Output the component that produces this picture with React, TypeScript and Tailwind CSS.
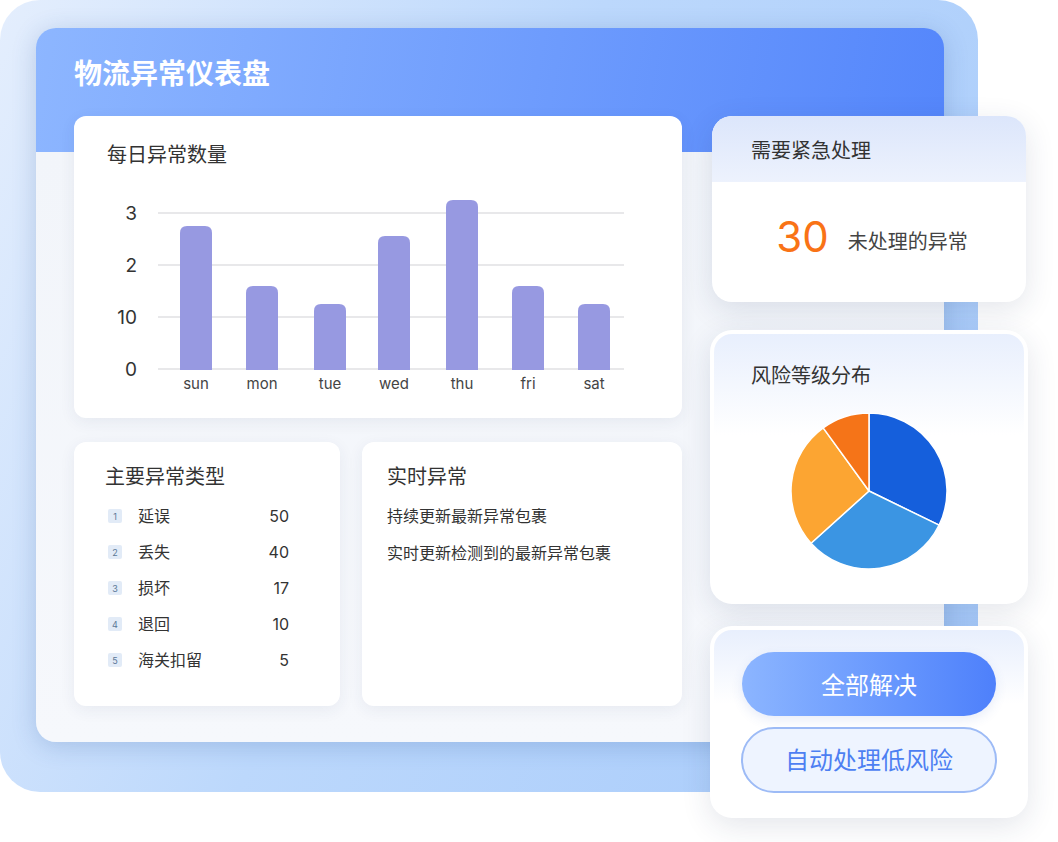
import React from 'react';

const days = [
    { label: 'sun', x: 122, top: 57 },
    { label: 'mon', x: 188, top: 117 },
    { label: 'tue', x: 256, top: 135 },
    { label: 'wed', x: 320, top: 67 },
    { label: 'thu', x: 388, top: 31 },
    { label: 'fri', x: 454, top: 117 },
    { label: 'sat', x: 520, top: 135 },
];

const ticks = [
    { label: '3', y: 44 },
    { label: '2', y: 96 },
    { label: '10', y: 148 },
    { label: '0', y: 200 },
];

const types = [
    { name: '延误', count: 50 },
    { name: '丢失', count: 40 },
    { name: '损坏', count: 17 },
    { name: '退回', count: 10 },
    { name: '海关扣留', count: 5 },
];

function barPath(cx: number, top: number, bottom: number, w = 32, r = 7) {
    const x = cx - w / 2;
    return `M${x},${bottom} V${top + r} Q${x},${top} ${x + r},${top} H${x + w - r} Q${x + w},${top} ${x + w},${top + r} V${bottom} Z`;
}

function BarChart() {
    return (
        <svg width="608" height="251" className="block">
            {ticks.map((t) => (
                <g key={t.label}>
                    <line x1="84" x2="550" y1={t.y} y2={t.y} stroke="#e8e8ea" strokeWidth="2" />
                    <text x="63" y={t.y + 7} textAnchor="end" fontSize="19" fill="#333">
                        {t.label}
                    </text>
                </g>
            ))}
            {days.map((d) => (
                <g key={d.label}>
                    <path d={barPath(d.x, d.top, 201)} fill="#9799e1" />
                    <text x={d.x} y="220" textAnchor="middle" fontSize="15" fill="#444">
                        {d.label}
                    </text>
                </g>
            ))}
        </svg>
    );
}

function PieChart() {
    return (
        <svg width="156" height="156" viewBox="0 0 156 156">
            <g stroke="#fff" strokeWidth="1.5" strokeLinejoin="round">
                <path d="M78,78 L78,0 A78,78 0 0 1 148.1,112.2 Z" fill="#155fdc" />
                <path d="M78,78 L148.1,112.2 A78,78 0 0 1 20,130.2 Z" fill="#3b95e3" />
                <path d="M78,78 L20,130.2 A78,78 0 0 1 32.2,14.9 Z" fill="#fca532" />
                <path d="M78,78 L32.2,14.9 A78,78 0 0 1 78,0 Z" fill="#f57418" />
            </g>
        </svg>
    );
}

export default function App() {
    return (
        <div className="w-[1058px] h-[842px] bg-white overflow-hidden font-['Inter','Noto_Sans_CJK_SC',sans-serif]">
            <div className="w-[978px] h-[792px] rounded-[40px] bg-[linear-gradient(115deg,#e4eefd_0%,#bcd8fc_45%,#a6cafb_100%)] pt-7 pl-9">
                <div className="w-[908px] h-[714px] rounded-[20px] px-[38px] pt-7 bg-[image:linear-gradient(to_bottom,transparent_124px,#f2f5fa_124px,#f6f8fc_100%),linear-gradient(100deg,#8db6ff,#4e81fb)] shadow-[0_4px_24px_rgba(40,80,150,0.22)]">
                    <h1 className="text-[28px] leading-9 font-bold text-white">物流异常仪表盘</h1>

                    <div className="mt-6 flex gap-[28px]">
                        {/* left column */}
                        <div className="w-[608px] shrink-0">
                            <div className="h-[302px] rounded-xl bg-white shadow-[0_4px_16px_rgba(40,60,100,0.07)] pt-[25px]">
                                <h2 className="pl-[33px] text-[20px] leading-7 text-[#333]">每日异常数量</h2>
                                <BarChart />
                            </div>

                            <div className="mt-6 flex gap-[22px]">
                                <div className="w-[266px] h-[264px] rounded-xl bg-white shadow-[0_4px_16px_rgba(40,60,100,0.07)] pt-[21px]">
                                    <h2 className="pl-[31px] text-[20px] leading-7 text-[#333]">主要异常类型</h2>
                                    <ul className="mt-[7px] pl-[34px] pr-[51px]">
                                        {types.map((t, i) => (
                                            <li key={t.name} className="h-9 flex items-center text-[16px] text-[#333]">
                                                <span className="w-3.5 h-3.5 rounded-[2px] bg-[#e2ebf7] text-[9px] leading-none text-[#5a7796] flex items-center justify-center">
                                                    {i + 1}
                                                </span>
                                                <span className="ml-4">{t.name}</span>
                                                <span className="ml-auto">{t.count}</span>
                                            </li>
                                        ))}
                                    </ul>
                                </div>

                                <div className="w-[320px] h-[264px] rounded-xl bg-white shadow-[0_4px_16px_rgba(40,60,100,0.07)] pt-[21px] pl-[25px]">
                                    <h2 className="text-[20px] leading-7 text-[#333]">实时异常</h2>
                                    <p className="mt-[13px] text-[16px] leading-6 text-[#333]">持续更新最新异常包裹</p>
                                    <p className="mt-[13px] text-[16px] leading-6 text-[#333]">实时更新检测到的最新异常包裹</p>
                                </div>
                            </div>
                        </div>

                        {/* right column, overlapping the frame */}
                        <div className="w-[318px] shrink-0 flex flex-col">
                            <div className="mx-[2px] h-[186px] shrink-0 rounded-[20px] overflow-hidden bg-white shadow-[0_8px_30px_rgba(30,50,90,0.12)]">
                                <div className="h-[66px] pl-[39px] pt-1 flex items-center bg-gradient-to-b from-[#dce6fb] to-[#edf2fd] text-[20px] text-[#333]">
                                    需要紧急处理
                                </div>
                                <div className="h-[120px] flex items-center justify-center gap-[19px] pl-[6px]">
                                    <span className="mb-[10px] text-[42px] leading-none text-[#f97316]">30</span>
                                    <span className="text-[20px] text-[#444]">未处理的异常</span>
                                </div>
                            </div>

                            <div className="mt-7 h-[274px] shrink-0 rounded-[22px] bg-white p-1 shadow-[0_8px_30px_rgba(30,50,90,0.12)]">
                                <div className="h-full rounded-[18px] bg-[linear-gradient(to_bottom,#e8effd,#ffffff_38%)] pt-7">
                                    <h2 className="pl-[37px] text-[20px] leading-7 text-[#333]">风险等级分布</h2>
                                    <div className="mt-[23px] flex justify-center">
                                        <PieChart />
                                    </div>
                                </div>
                            </div>

                            <div className="mt-[22px] h-[192px] shrink-0 rounded-[22px] bg-white p-1 shadow-[0_8px_30px_rgba(30,50,90,0.12)]">
                                <div className="h-full rounded-[18px] bg-[linear-gradient(to_bottom,#e8effd,#ffffff_40%)] pt-[22px] px-[28px] flex flex-col gap-[11px]">
                                    <button className="h-16 w-full pt-1 rounded-full bg-gradient-to-r from-[#8cb5ff] to-[#4e80fb] text-[24px] text-white shadow-[0_4px_12px_rgba(60,100,200,0.12)]">
                                        全部解决
                                    </button>
                                    <button className="h-[66px] -mx-px pt-0.5 rounded-full border-2 border-[#9dbbf6] bg-[#eef4ff] text-[24px] text-[#4d7ff2]">
                                        自动处理低风险
                                    </button>
                                </div>
                            </div>
                        </div>
                    </div>
                </div>
            </div>
        </div>
    );
}
